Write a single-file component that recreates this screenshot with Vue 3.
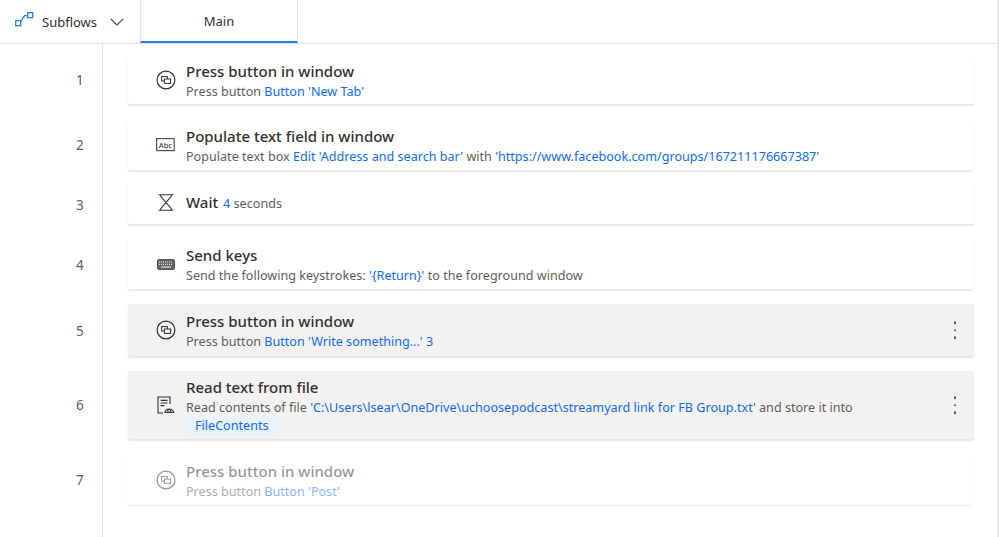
<script setup>
const steps = [
  { n: 1, icon: 'press', title: 'Press button in window', h: 48, mt: 12, numPad: 0, lines: [[['Press button ', 0], ["Button 'New Tab'", 1]]] },
  { n: 2, icon: 'text', title: 'Populate text field in window', h: 50, mt: 16, numPad: 0, lines: [[['Populate text box ', 0], ["Edit 'Address and search bar'", 1], [' with ', 0], ["'https://www.facebook.com/groups/167211176667387'", 1]]] },
  { n: 3, icon: 'wait', title: 'Wait', h: 44, mt: 10, numPad: 6, inline: [['4', 1], [' seconds', 0]], lines: [] },
  { n: 4, icon: 'keys', title: 'Send keys', h: 50, mt: 15, numPad: 2, lines: [[['Send the following keystrokes: ', 0], ["'{Return}'", 1], [' to the foreground window', 0]]] },
  { n: 5, icon: 'press', title: 'Press button in window', h: 52, mt: 15, numPad: 2, active: true, lines: [[['Press button ', 0], ["Button 'Write something...' 3", 1]]] },
  { n: 6, icon: 'file', title: 'Read text from file', h: 68, mt: 15, numPad: 0, active: true, chip: 'FileContents', lines: [[['Read contents of file ', 0], ["'C:\\Users\\lsear\\OneDrive\\uchoosepodcast\\streamyard link for FB Group.txt'", 1], [' and store it into', 0]]] },
  { n: 7, icon: 'press', title: 'Press button in window', h: 51, mt: 15, numPad: 1, disabled: true, lines: [[['Press button ', 0], ["Button 'Post'", 1]]] }
]
</script>

<template>
  <div class="page">
    <header class="topbar">
      <div class="subflows">
        <svg class="flow-icon" width="19" height="15" viewBox="0 0 19 15" fill="none" stroke="#2b7cf0" stroke-width="1.3">
          <rect x=".7" y="8.7" width="5" height="5" />
          <rect x="12.7" y=".7" width="5" height="5" />
          <path d="M5.7 9.6 L9.6 3.6 H12.7" />
        </svg>
        <span class="subflows-label">Subflows</span>
        <svg class="chevron" width="14" height="8" viewBox="0 0 14 8" fill="none" stroke="#444" stroke-width="1.1">
          <path d="M.8 .8 L7 7 L13.2 .8" />
        </svg>
      </div>
      <div class="tab">Main</div>
    </header>

    <main class="flow">
      <div v-for="s in steps" :key="s.n" class="row" :style="{ marginTop: s.mt + 'px', height: s.h + 'px' }">
        <div class="num" :style="{ paddingTop: s.numPad + 'px' }">{{ s.n }}</div>
        <div class="card" :class="{ active: s.active, disabled: s.disabled }">
          <div class="icon">
            <svg v-if="s.icon === 'press'" width="20" height="20" viewBox="0 0 20 20" fill="none" stroke="currentColor">
              <circle cx="10" cy="10" r="8.9" stroke-width="1.2" />
              <rect x="5.6" y="6.6" width="5.8" height="4.4" stroke-width="1" />
              <rect x="8.4" y="9" width="6.2" height="4.4" fill="var(--card-bg)" stroke-width="1" />
            </svg>
            <svg v-else-if="s.icon === 'text'" width="19" height="14" viewBox="0 0 19 14" fill="none">
              <rect x=".6" y=".6" width="17.6" height="12" stroke="#555" stroke-width="1.2" />
              <text x="2.8" y="9.6" class="abc">Abc</text>
            </svg>
            <svg v-else-if="s.icon === 'wait'" width="16" height="17" viewBox="0 0 16 17" fill="none" stroke="currentColor" stroke-width="1.1">
              <path d="M.6 .7 H15.4 M.6 16.3 H15.4 M2.6 .7 V2 L13.4 15 V16.3 M13.4 .7 V2 L2.6 15 V16.3" />
            </svg>
            <svg v-else-if="s.icon === 'keys'" width="18" height="11" viewBox="0 0 18 11">
              <rect x=".5" y=".5" width="17" height="10" rx="1.4" fill="#666" stroke="#555" />
              <path d="M2 3 H16 M2 5.4 H16" stroke="#eee" stroke-width="1" stroke-dasharray="1 1" />
              <path d="M4 8 H14" stroke="#eee" stroke-width="1" />
            </svg>
            <svg v-else width="18" height="18" viewBox="0 0 18 18" fill="none" stroke="currentColor" stroke-width="1.1">
              <path d="M6 17 H1 V1 H13 V8" />
              <path d="M3.6 4.4 H10.6 M3.6 7 H10.6 M3.6 9.6 H7.6" />
              <path d="M7.6 16.4 C9.4 11.8 14.8 11.8 17 16.4" />
              <path d="M7.6 16.4 H17" />
              <circle cx="12.2" cy="15" r="1.5" />
            </svg>
          </div>
          <div class="body" :class="{ solo: s.inline || s.chip }">
            <div class="title">
              {{ s.title }}
              <span v-if="s.inline" class="sub inline"><span v-for="(p, i) in s.inline" :key="i" :class="{ link: p[1] }">{{ p[0] }}</span></span>
            </div>
            <div v-for="(line, li) in s.lines" :key="li" class="sub line">
              <span v-for="(p, i) in line" :key="i" :class="{ link: p[1] }">{{ p[0] }}</span>
            </div>
            <div v-if="s.chip" class="chip-line"><span class="chip">{{ s.chip }}</span></div>
          </div>
          <div v-if="s.active" class="more">
            <i></i><i></i><i></i>
          </div>
        </div>
      </div>
    </main>
  </div>
</template>

<style>
html, body {
  margin: 0;
  background: #fff;
  overflow: hidden;
}
</style>

<style scoped>
.page {
  width: 999px;
  height: 537px;
  box-sizing: border-box;
  display: flex;
  flex-direction: column;
  font-family: "Noto Sans", "Open Sans", sans-serif;
  color: #323130;
  border-right: 2px solid #e8e8e8;
  overflow: hidden;
}
.topbar {
  height: 44px;
  flex: none;
  display: flex;
  box-sizing: border-box;
  border-bottom: 1px solid #e1e1e1;
}
.subflows {
  width: 140px;
  box-sizing: border-box;
  padding-left: 15px;
  display: flex;
  align-items: center;
}
.flow-icon {
  margin-right: 8px;
  margin-top: -4px;
}
.subflows-label {
  font-size: 13px;
  color: #323130;
  width: 68px;
}
.tab {
  width: 158px;
  height: 43px;
  box-sizing: border-box;
  border-left: 1px solid #e6e6e6;
  border-right: 1px solid #e6e6e6;
  border-bottom: 2px solid #2b7cf0;
  text-align: center;
  line-height: 42px;
  font-size: 13px;
}
.flow {
  flex: 1;
  width: 102px;
  border-right: 1px solid #e1e1e1;
  box-sizing: content-box;
}
.row {
  display: flex;
  width: 974px;
}
.num {
  width: 128px;
  flex: none;
  box-sizing: border-box;
  padding-left: 76px;
  display: flex;
  align-items: center;
  font-size: 13.5px;
  color: #605e5c;
}
.card {
  --card-bg: #fff;
  flex: 1;
  display: flex;
  align-items: center;
  position: relative;
  background: var(--card-bg);
  box-shadow: 0 2px 2px rgba(0, 0, 0, 0.1);
  border-radius: 2px;
}
.card.active {
  --card-bg: #f3f2f1;
}
.card.disabled {
  box-shadow: 0 1px 1px rgba(0, 0, 0, 0.08);
}
.card.disabled .title,
.card.disabled .icon {
  opacity: 0.5;
}
.icon {
  width: 58px;
  flex: none;
  display: flex;
  justify-content: center;
  color: #323130;
  box-sizing: border-box;
  padding-left: 17px;
}
.abc {
  font-size: 7.5px;
  font-family: "Noto Sans", sans-serif;
  font-weight: 500;
  fill: #444;
}
.body {
  margin-top: 2px;
}
.body.solo {
  margin-top: 0;
}
.title {
  font-size: 15px;
  line-height: 20px;
  font-weight: 500;
  color: #323130;
  white-space: nowrap;
}
.sub {
  font-size: 12.6px;
  line-height: 18px;
  color: #605e5c;
  white-space: nowrap;
}
.line {
  margin-top: 2px;
}
.sub.inline {
  font-weight: 400;
  margin-left: 1px;
}
.link {
  color: #0f6cf0;
}
.chip-line {
  line-height: 18px;
  height: 18px;
  margin-top: -2px;
}
.chip {
  display: inline-block;
  background: #e8f1fc;
  color: #0f6cf0;
  font-size: 12.6px;
  line-height: 18px;
  padding: 0 9px;
  border-radius: 9px;
}
.more {
  position: absolute;
  right: 18px;
  top: 50%;
  transform: translateY(-50%);
  display: flex;
  flex-direction: column;
  gap: 5px;
}
.more i {
  width: 2.5px;
  height: 2.5px;
  border-radius: 50%;
  background: #555;
}
.card.disabled .sub {
  opacity: 0.5;
}
</style>
